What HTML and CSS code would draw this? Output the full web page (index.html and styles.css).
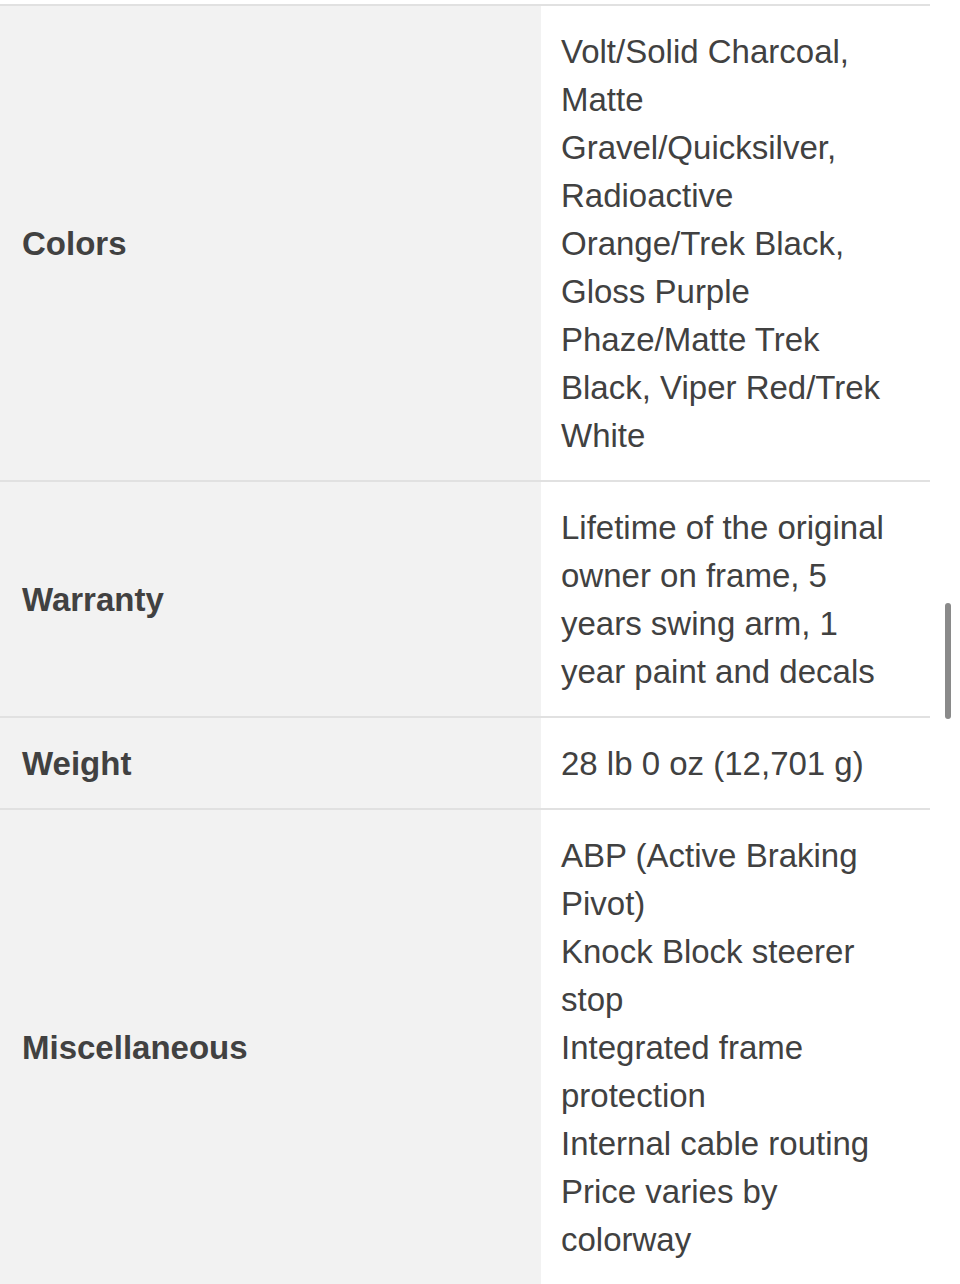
FILE: index.html
```html
<!DOCTYPE html>
<html lang="en">
<head>
<meta charset="utf-8">
<title>Specs</title>
<link rel="stylesheet" href="styles.css">
</head>
<body>
<table class="specs">
  <tbody>
    <tr>
      <th class="label">Colors</th>
      <td class="value">Volt/Solid Charcoal, Matte Gravel/Quicksilver, Radioactive Orange/Trek Black, Gloss Purple Phaze/Matte Trek Black, Viper Red/Trek White</td>
    </tr>
    <tr>
      <th class="label">Warranty</th>
      <td class="value">Lifetime of the original owner on frame, 5 years swing arm, 1 year paint and decals</td>
    </tr>
    <tr>
      <th class="label">Weight</th>
      <td class="value">28 lb 0 oz (12,701 g)</td>
    </tr>
    <tr>
      <th class="label">Miscellaneous</th>
      <td class="value">ABP (Active Braking Pivot)<br>Knock Block steerer stop<br>Integrated frame protection<br>Internal cable routing<br>Price varies by colorway</td>
    </tr>
  </tbody>
</table>
<div class="scrollbar"></div>
</body>
</html>
```

FILE: styles.css
```css
html, body {
  margin: 0;
  padding: 0;
  overflow: hidden;
  background: #ffffff;
}
body {
  padding-top: 4px;
  font-family: "Liberation Sans", Arial, sans-serif;
  color: #414141;
  font-size: 33px;
  line-height: 48px;
}
.specs {
  width: 930px;
  border-collapse: collapse;
  table-layout: fixed;
}
.specs tr {
  border-top: 2px solid #e1e1e1;
}
.label {
  width: 519px;
  background: #f2f2f2;
  text-align: left;
  font-weight: bold;
  padding: 22px 0 20px 22px;
  vertical-align: middle;
}
.value {
  background: #ffffff;
  padding: 22px 40px 20px 20px;
  vertical-align: middle;
  font-weight: normal;
}
.scrollbar {
  position: absolute;
  left: 945px;
  top: 603px;
  width: 6px;
  height: 116px;
  border-radius: 3px;
  background: #8a8a8a;
}
```
